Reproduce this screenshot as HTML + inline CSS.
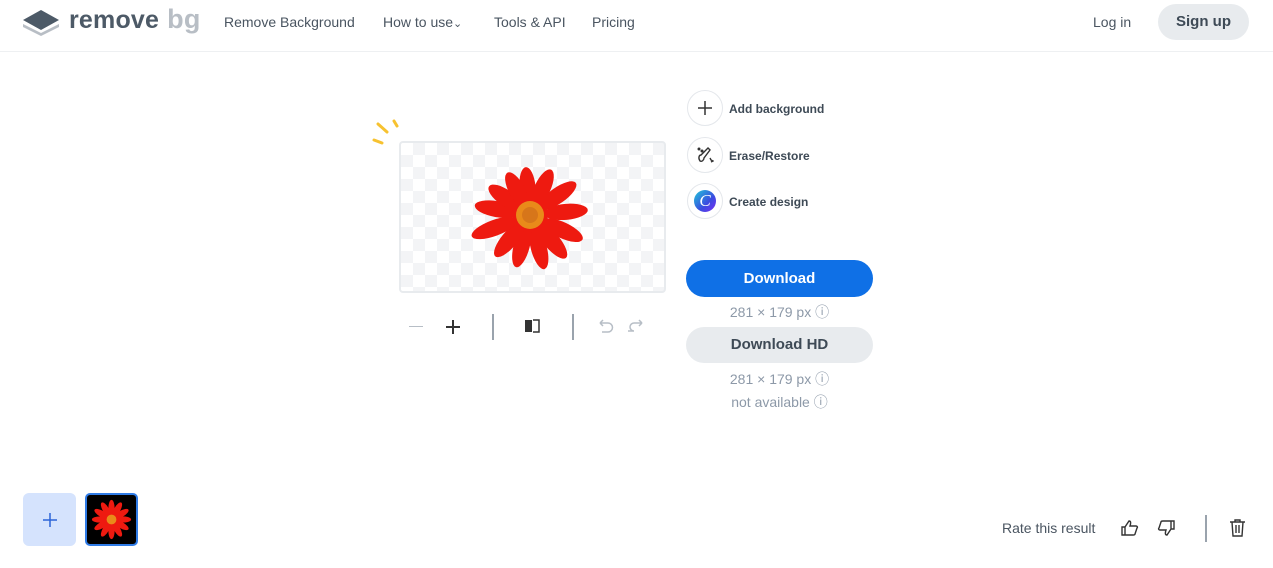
<!DOCTYPE html><html><head><style>
*{margin:0;padding:0;box-sizing:border-box}
body{width:1273px;height:568px;background:#fff;font-family:"Liberation Sans",sans-serif;color:#454f5b;position:relative;overflow:hidden}
.a{position:absolute}
.nav{font-size:14px;color:#4a5561;top:14px}
.circ{position:absolute;width:36px;height:36px;border-radius:50%;border:1px solid #e4e7eb;background:#fff;display:flex;align-items:center;justify-content:center}
.lbl{font-size:12px;font-weight:bold;color:#3e4a56}
.small{font-size:14px;color:#8d99a8;text-align:center;width:187px}
.check{background-color:#fff;background-image:linear-gradient(45deg,#f3f4f6 25%,transparent 25%,transparent 75%,#f3f4f6 75%),linear-gradient(45deg,#f3f4f6 25%,transparent 25%,transparent 75%,#f3f4f6 75%);background-size:24px 24px;background-position:0 0,12px 12px}
</style></head><body>
<div class="a" style="top:51px;left:0;width:1273px;height:1px;background:#eef0f2"></div>
<svg class="a" style="left:22px;top:8px" width="38" height="28" viewBox="0 0 38 28"><path d="M1 16 L19 25 L37 16 L37 19 L19 28 L1 19Z" fill="#b8bec5"/><path d="M1 12 L19 2 L37 12 L19 22Z" fill="#4d5a67"/></svg>
<div class="a" style="left:69px;top:4px;font-size:25px;font-weight:bold;color:#4d5a67;letter-spacing:0.2px">remove<span style="color:#b8bec5;font-weight:bold;font-size:27px;margin-left:8px">bg</span></div>
<div class="a nav" style="left:224px">Remove Background</div>
<div class="a nav" style="left:383px">How to use<span style="font-size:11px">&#8964;</span></div>
<div class="a nav" style="left:494px">Tools &amp; API</div>
<div class="a nav" style="left:592px">Pricing</div>
<div class="a nav" style="left:1093px">Log in</div>
<div class="a" style="left:1158px;top:4px;width:91px;height:36px;border-radius:18px;background:#e8ebee;font-size:15px;font-weight:bold;color:#3e4a56;text-align:center;line-height:36px">Sign up</div>
<svg class="a" style="left:370px;top:118px" width="32" height="30"><g stroke="#f7c230" stroke-width="3" stroke-linecap="round"><line x1="4" y1="22" x2="12" y2="25"/><line x1="8" y1="6" x2="17" y2="14"/><line x1="24" y1="3" x2="27" y2="8"/></g></svg>
<div class="a check" style="left:399px;top:141px;width:267px;height:152px;border:2px solid #e8ebee;border-radius:4px"></div>
<svg class="a" style="left:460px;top:160px" width="140" height="115" viewBox="-70 -55 140 115">
<g fill="#ee1a10">
<ellipse rx="8" ry="20" transform="rotate(-5) translate(0,-28)"/>
<ellipse rx="8" ry="20" transform="rotate(25) translate(0,-30)"/>
<ellipse rx="8" ry="22" transform="rotate(55) translate(0,-34)"/>
<ellipse rx="8" ry="22" transform="rotate(85) translate(0,-36)"/>
<ellipse rx="8" ry="22" transform="rotate(115) translate(0,-36)"/>
<ellipse rx="8" ry="22" transform="rotate(140) translate(0,-34)"/>
<ellipse rx="8" ry="22" transform="rotate(165) translate(0,-34)"/>
<ellipse rx="8" ry="22" transform="rotate(195) translate(0,-32)"/>
<ellipse rx="8" ry="22" transform="rotate(220) translate(0,-32)"/>
<ellipse rx="8" ry="24" transform="rotate(250) translate(0,-38)"/>
<ellipse rx="8" ry="22" transform="rotate(280) translate(0,-34)"/>
<ellipse rx="8" ry="20" transform="rotate(305) translate(0,-30)"/>
<ellipse rx="8" ry="20" transform="rotate(332) translate(0,-28)"/>
<circle r="18"/>
</g>
<circle r="14" fill="#e98a1a"/><circle r="8" fill="#d7761a"/>
</svg>
<div class="a" style="left:409px;top:326px;width:14px;height:1px;background:#b7bec6"></div>
<div class="a" style="left:446px;top:326px;width:14px;height:1.5px;background:#333"></div>
<div class="a" style="left:452px;top:320px;width:1.5px;height:14px;background:#333"></div>
<div class="a" style="left:492px;top:314px;width:1.5px;height:26px;background:#9aa3ad"></div>
<svg class="a" style="left:524px;top:319px" width="18" height="14"><rect x="1" y="1" width="7" height="12" fill="#333"/><path d="M9 1h6v12h-6" fill="none" stroke="#333" stroke-width="1.5"/></svg>
<div class="a" style="left:572px;top:314px;width:1.5px;height:26px;background:#9aa3ad"></div>
<svg class="a" style="left:596px;top:318px" width="56" height="18" fill="none" stroke="#b7bec6" stroke-width="1.5"><path d="M4 5h8a4 4 0 0 1 0 9h-6M4 5l3-3M4 5l3 3"/><path d="M52 9h-8a4 4 0 0 0 0 8h-6M52 9l-3-3M52 9l-3 3" transform="translate(-6,-4)"/></svg>
<div class="circ" style="left:687px;top:90px"><svg width="16" height="16"><path d="M8 1v14M1 8h14" stroke="#333" stroke-width="1.5"/></svg></div>
<div class="a lbl" style="left:729px;top:102px">Add background</div>
<div class="circ" style="left:687px;top:137px"><svg width="18" height="18" fill="none" stroke="#333" stroke-width="1.4"><path d="M4 15c2 1 4-1 4-3l6-8-2-2-7 7c-2 0-3 3-1 6z"/><circle cx="3" cy="3" r=".8" fill="#333"/><circle cx="6" cy="5" r=".8" fill="#333"/><path d="M14 12l1 2 2 1-2 1"/></svg></div>
<div class="a lbl" style="left:729px;top:149px">Erase/Restore</div>
<div class="circ" style="left:687px;top:183px"><div style="width:22px;height:22px;border-radius:50%;background:linear-gradient(135deg,#1fc8d9,#3b4be0 60%,#7b2ff2);color:#fff;font-family:'Liberation Serif',serif;font-style:italic;font-size:17px;line-height:22px;text-align:center">C</div></div>
<div class="a lbl" style="left:729px;top:195px">Create design</div>
<div class="a" style="left:686px;top:260px;width:187px;height:37px;border-radius:19px;background:#0f70e6;color:#fff;font-size:15px;font-weight:bold;text-align:center;line-height:37px">Download</div>
<div class="a small" style="left:686px;top:302px">281 × 179 px &#9432;</div>
<div class="a" style="left:686px;top:327px;width:187px;height:36px;border-radius:18px;background:#e8ebee;color:#3e4a56;font-size:15px;font-weight:bold;text-align:center;line-height:36px">Download HD</div>
<div class="a small" style="left:686px;top:369px">281 × 179 px &#9432;</div>
<div class="a small" style="left:686px;top:392px">not available &#9432;</div>
<div class="a" style="left:23px;top:493px;width:53px;height:53px;border-radius:6px;background:#d5e3fd;display:flex;align-items:center;justify-content:center"><svg width="16" height="16"><path d="M8 1v14M1 8h14" stroke="#2d64d8" stroke-width="1.5"/></svg></div>
<div class="a" style="left:85px;top:493px;width:53px;height:53px;border-radius:5px;background:#000;border:2px solid #2f7be6;overflow:hidden"><svg width="49" height="49" viewBox="-70 -70 140 140"><g fill="#ee1a10"><ellipse rx="9" ry="24" transform="rotate(0) translate(0,-32)"/><ellipse rx="9" ry="24" transform="rotate(30) translate(0,-32)"/><ellipse rx="9" ry="24" transform="rotate(60) translate(0,-32)"/><ellipse rx="9" ry="24" transform="rotate(90) translate(0,-32)"/><ellipse rx="9" ry="24" transform="rotate(120) translate(0,-32)"/><ellipse rx="9" ry="24" transform="rotate(150) translate(0,-32)"/><ellipse rx="9" ry="24" transform="rotate(180) translate(0,-32)"/><ellipse rx="9" ry="24" transform="rotate(210) translate(0,-32)"/><ellipse rx="9" ry="24" transform="rotate(240) translate(0,-32)"/><ellipse rx="9" ry="24" transform="rotate(270) translate(0,-32)"/><ellipse rx="9" ry="24" transform="rotate(300) translate(0,-32)"/><ellipse rx="9" ry="24" transform="rotate(330) translate(0,-32)"/><circle r="20"/></g><circle r="14" fill="#e98a1a"/></svg></div>
<div class="a" style="left:1002px;top:520px;font-size:14px;color:#4a5561">Rate this result</div>
<svg class="a" style="left:1121px;top:519px" width="18" height="18" fill="none" stroke="#333" stroke-width="1.4"><path d="M1 8h3v8H1zM4 8l4-6c2 0 2 2 1 5h6c1 0 2 1 1 2l-2 6c0 1-1 1-2 1H4"/></svg>
<svg class="a" style="left:1157px;top:519px" width="18" height="18" fill="none" stroke="#333" stroke-width="1.4"><g transform="rotate(180 9 9)"><path d="M1 8h3v8H1zM4 8l4-6c2 0 2 2 1 5h6c1 0 2 1 1 2l-2 6c0 1-1 1-2 1H4"/></g></svg>
<div class="a" style="left:1205px;top:515px;width:1.5px;height:27px;background:#9aa3ad"></div>
<svg class="a" style="left:1229px;top:519px" width="17" height="18" fill="none" stroke="#333" stroke-width="1.4"><path d="M1 3h15M6 3V1h5v2M3 3l1 14h9l1-14M7 6v8M10 6v8"/></svg>
</body></html>
